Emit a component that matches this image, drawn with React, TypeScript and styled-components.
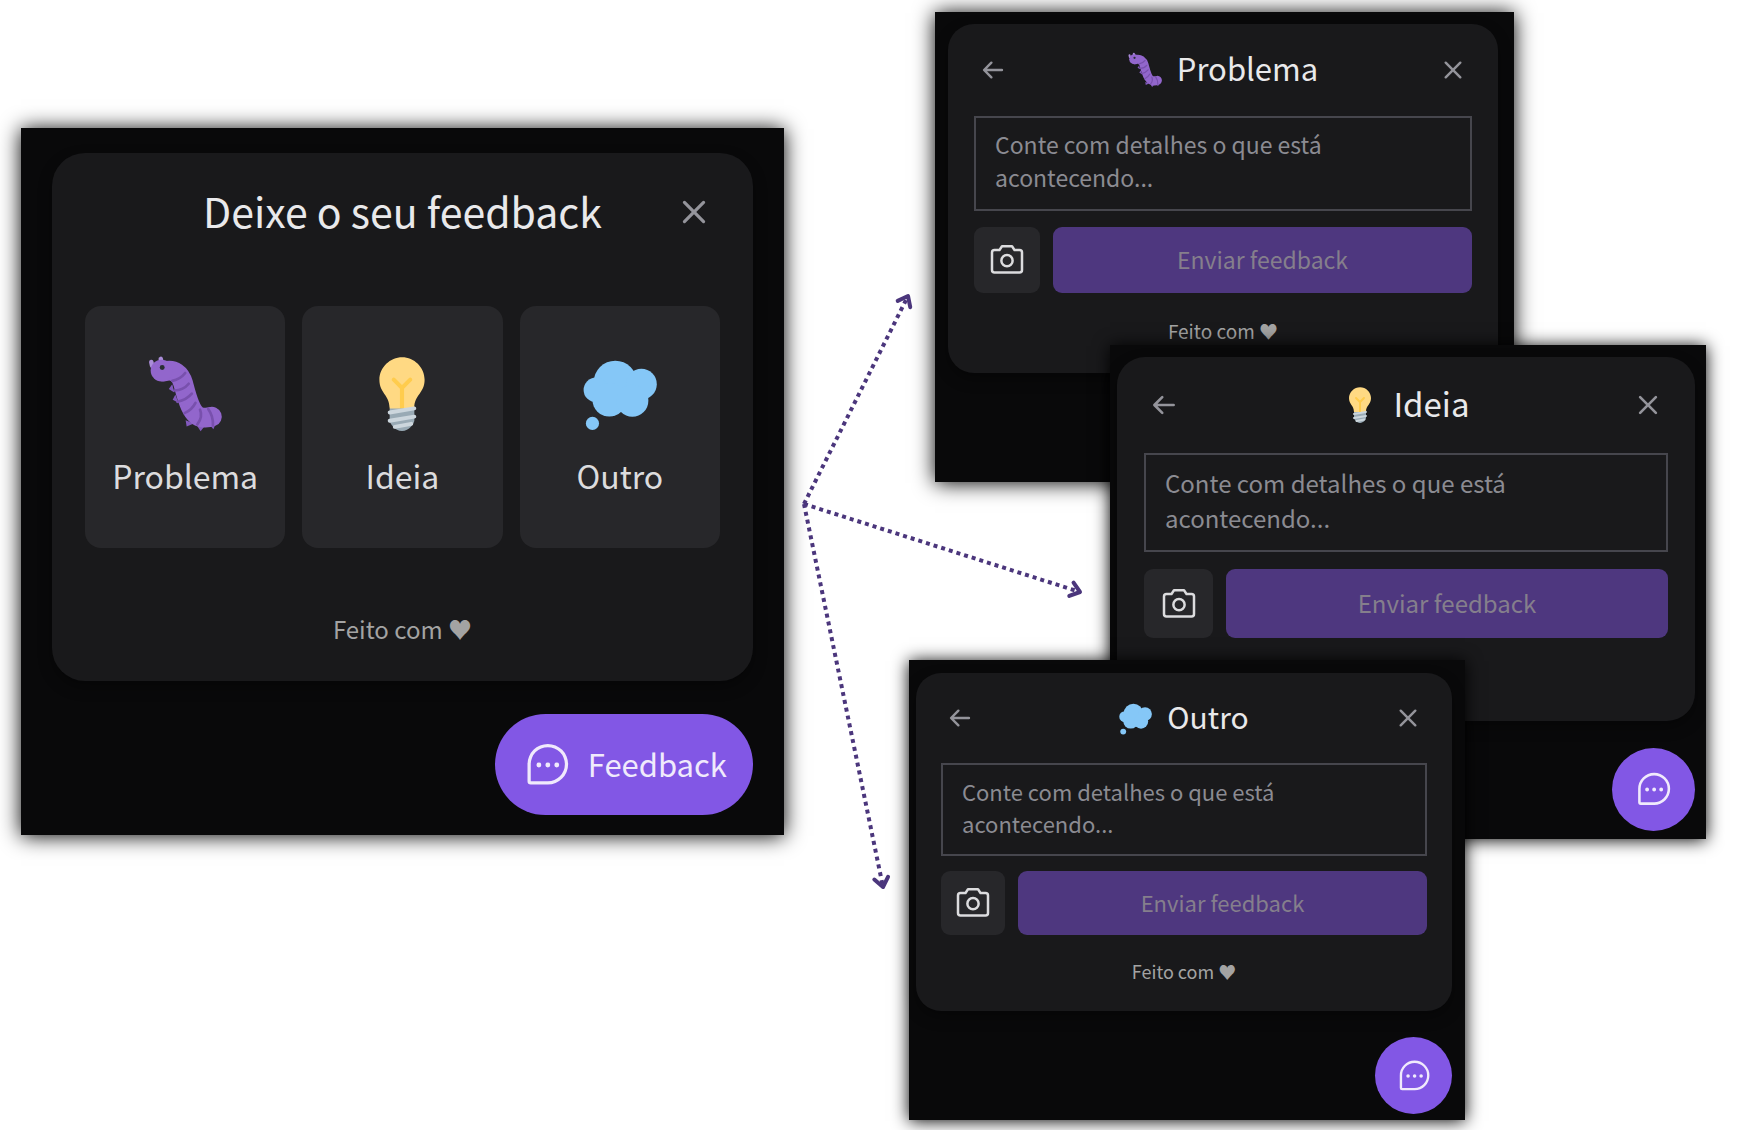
import React, { useId } from "react";
import styled, { createGlobalStyle } from "styled-components";
import {
  PiArrowLeftBold,
  PiCamera,
  PiChatTeardropDots,
  PiXBold,
} from "react-icons/pi";

const fontStack = `"Noto Sans CJK JP", "Noto Sans", "DejaVu Sans", sans-serif`;

const GlobalStyle = createGlobalStyle`
  *, *::before, *::after { box-sizing: border-box; }
  body { margin: 0; background: #fff; font-family: ${fontStack}; }
  button, textarea { font: inherit; border: 0; margin: 0; padding: 0; }
  h2, p { margin: 0; font-weight: 400; }
`;

type Metrics = {
  space: number;
  gap: number;
  header: number;
  title: number;
  text: number;
  line: number;
  small: number;
  footer: number;
  icon: number;
  button: number;
  radius: number;
};

const base: Metrics = { space: 26, gap: 16, header: 40, title: 31, text: 23, line: 33, small: 19, footer: 28, icon: 26, button: 66, radius: 26 };
const large: Metrics = { space: 27, gap: 17, header: 42, title: 33, text: 24, line: 35, small: 20, footer: 29, icon: 28, button: 69, radius: 28 };
const compact: Metrics = { space: 25, gap: 15, header: 40, title: 30, text: 22, line: 32, small: 18, footer: 26, icon: 26, button: 64, radius: 25 };

const Canvas = styled.main`
  position: relative;
  min-height: 100vh;
  min-width: 1720px;
  overflow: hidden;
`;

const Window = styled.section<{ $x: number; $y: number; $w: number; $h: number; $pad: string; $blur: number }>`
  position: absolute;
  left: ${(p) => p.$x}px;
  top: ${(p) => p.$y}px;
  width: ${(p) => p.$w}px;
  min-height: ${(p) => p.$h}px;
  padding: ${(p) => p.$pad};
  display: flex;
  flex-direction: column;
  background: #09090a;
  box-shadow: 0 1px ${(p) => p.$blur}px #000;
`;

const Card = styled.div<{ $space: number; $radius: number }>`
  display: flex;
  flex-direction: column;
  padding: ${(p) => p.$space}px;
  border-radius: ${(p) => p.$radius}px;
  background: #19191b;
  box-shadow: 0 6px 14px rgba(0, 0, 0, 0.35);
`;

const Header = styled.header<{ $h: number; $below: number }>`
  display: grid;
  grid-template-columns: 52px 1fr 52px;
  align-items: center;
  height: ${(p) => p.$h}px;
  margin-bottom: ${(p) => p.$below}px;
`;

const Title = styled.h2<{ $size: number }>`
  grid-column: 2;
  display: flex;
  align-items: center;
  justify-content: center;
  gap: 15px;
  font-size: ${(p) => p.$size}px;
  line-height: 34px;
  color: #e9e9eb;
  white-space: nowrap;
`;

const TitleText = styled.span`
  padding-bottom: 5px;
`;

const IconButton = styled.button<{ $end?: boolean; $inset?: number }>`
  display: flex;
  align-items: center;
  justify-content: ${(p) => (p.$end ? "flex-end" : "flex-start")};
  grid-column: ${(p) => (p.$end ? 3 : 1)};
  && { padding: 0 ${(p) => p.$inset ?? 6}px; }
  color: #94949b;
  background: none;
  cursor: pointer;
`;

const Options = styled.div`
  display: grid;
  grid-template-columns: repeat(3, 1fr);
  gap: 17px;
`;

const Option = styled.button`
  display: flex;
  flex-direction: column;
  align-items: center;
  gap: 20px;
  && {
    padding: 51px 0 49px;
    font-size: 32px;
    line-height: 48px;
  }
  border-radius: 16px;
  background: #27272a;
  color: #dcdcde;
  cursor: pointer;
`;

const Form = styled.form<{ $gap: number }>`
  display: flex;
  flex-direction: column;
  gap: ${(p) => p.$gap}px;
`;

const Message = styled.textarea<{ $size: number; $line: number }>`
  display: block;
  width: 100%;
  height: ${(p) => p.$line * 2 + 29}px;
  && {
    padding: 10px 19px;
    border: 2px solid #46464d;
    font-size: ${(p) => p.$size}px;
    line-height: ${(p) => p.$line}px;
  }
  overflow: hidden;
  resize: none;
  background: transparent;
  color: #f4f4f5;
  &::placeholder { color: #8b8b92; opacity: 1; }
`;

const Actions = styled.div<{ $h: number }>`
  display: grid;
  grid-template-columns: ${(p) => p.$h}px 1fr;
  gap: 13px;
  height: ${(p) => p.$h}px;
`;

const Capture = styled.button`
  display: grid;
  place-items: center;
  border-radius: 9px;
  background: #27272a;
  color: #dcdcde;
  cursor: pointer;
`;

const Send = styled.button<{ $size: number }>`
  border-radius: 9px;
  background: #4e377f;
  color: #857f8c;
  && {
    padding-bottom: 3px;
    font-size: ${(p) => p.$size}px;
  }
`;

const Footer = styled.p<{ $size: number; $above: number; $line: number }>`
  margin-top: ${(p) => p.$above}px;
  padding-bottom: 4px;
  text-align: center;
  font-size: ${(p) => p.$size}px;
  line-height: ${(p) => p.$line - 4}px;
  color: #a3a3a3;
`;

const Launcher = styled.button<{ $size: number; $above: number; $wide?: boolean }>`
  align-self: flex-end;
  display: flex;
  align-items: center;
  justify-content: center;
  gap: 15px;
  height: ${(p) => p.$size}px;
  width: ${(p) => (p.$wide ? "auto" : `${p.$size}px`)};
  && {
    margin-top: ${(p) => p.$above}px;
    padding: ${(p) => (p.$wide ? "0 26px" : "0")};
    font-size: 31px;
  }
  border-radius: 52px;
  background: #8257e5;
  color: #f0eafc;
  cursor: pointer;
`;

const LauncherText = styled.span`
  padding-bottom: 3px;
`;

const Arrows = styled.svg`
  position: absolute;
  left: 0;
  top: 0;
  pointer-events: none;
`;

type Kind = "problem" | "idea" | "other";

function Worm() {
  return (
    <g transform="translate(0.8 -0.2)">
      <path d="M1.200 4.500 0.800 2.600M5.800 3 5.400 1.100" stroke="#aa8dd8" strokeWidth="2.200" strokeLinecap="round" />
      <path d="M11 13.500 9.300 15.800 12 17.500ZM12.500 18.500 11.200 21 14 22.500ZM17.500 31 18 34 21.500 32.500ZM23 33.500 24.800 36.300 27 33.500ZM29.500 33.500 31 35.300 32.500 32Z" fill="#8259bd" />
      <path d="M7 7.300C12 5.800 15 8.500 16.300 13C17.800 18.500 20 28.800 25.500 29.600C28 30 29.500 29.500 30.300 29.200" fill="none" stroke="#9266cc" strokeWidth="9.600" strokeLinecap="round" strokeLinejoin="round" />
      <circle cx="5.800" cy="6.800" r="5.300" fill="#9266cc" />
      <path d="M11 11.800Q15 11 17.300 8M12 16.500Q16.500 16.300 19 13.200M13.500 22Q18 21 20.500 18M17 27.500Q20.500 26 22.300 22.500M23.200 33Q26 29.500 24.500 25.800M30.800 33.500Q31 29 28.500 25.500" fill="none" stroke="#7850ad" strokeWidth="1.300" strokeLinecap="round" />
      <circle cx="6.100" cy="5.300" r="1.200" fill="#292f33" />
    </g>
  );
}

function Bulb() {
  return (
    <>
      <path fill="#FFD983" d="M29 11.060c0 6.439-5 7.439-5 13.440 0 3.098-3.123 3.359-5.500 3.359-2.053 0-6.586-.779-6.586-3.361C11.914 18.500 7 17.500 7 11.060 7 5.029 12.285.14 18.083.14 23.883.14 29 5.029 29 11.060z" />
      <path fill="#FFCC4D" d="M22.707 10.293c-.391-.391-1.023-.391-1.414 0L18 13.586l-3.293-3.293c-.391-.391-1.023-.391-1.414 0s-.391 1.023 0 1.414L17 15.414V26c0 .553.447 1 1 1s1-.447 1-1V15.414l3.707-3.707c.391-.391.391-1.023 0-1.414z" />
      <path fill="#99AAB5" d="M24 31c0 1.104-2.500 5-6 5s-6-3.896-6-5v-6h12v6z" />
      <path d="M12 27 24 25M12 31 24 29M14.500 34 22.500 32.500" stroke="#CCD6DD" strokeWidth="1.900" strokeLinecap="round" />
    </>
  );
}

function Cloud() {
  return (
    <g fill="#85c7f7">
      <circle cx="15.700" cy="12.300" r="10.500" />
      <circle cx="28.400" cy="13.200" r="7.500" />
      <circle cx="6.300" cy="16" r="6" />
      <circle cx="12.800" cy="20.800" r="8.200" />
      <circle cx="24" cy="21.300" r="7.800" />
      <circle cx="4.600" cy="32.300" r="3.200" />
    </g>
  );
}

const drawings = { problem: Worm, idea: Bulb, other: Cloud };

function Emoji({ kind, size }: { kind: Kind; size: number }) {
  const Drawing = drawings[kind];
  return (
    <svg width={size} height={size} viewBox="0 0 36 36" overflow="visible" aria-hidden="true">
      <Drawing />
    </svg>
  );
}

const options: { kind: Kind; label: string }[] = [
  { kind: "problem", label: "Problema" },
  { kind: "idea", label: "Ideia" },
  { kind: "other", label: "Outro" },
];

function FeedbackForm({ kind, title, metrics: m }: { kind: Kind; title: string; metrics: Metrics }) {
  const id = useId();
  return (
    <Card $space={m.space} $radius={m.radius}>
      <Header $h={m.header} $below={m.space}>
        <IconButton type="button" aria-label="Voltar">
          <PiArrowLeftBold size={m.icon} />
        </IconButton>
        <Title id={id} $size={m.title}>
          <Emoji kind={kind} size={m.title + 3} />
          <TitleText>{title}</TitleText>
        </Title>
        <IconButton type="button" aria-label="Fechar" $end>
          <PiXBold size={m.icon} />
        </IconButton>
      </Header>
      <Form $gap={m.gap}>
        <Message
          aria-labelledby={id}
          placeholder="Conte com detalhes o que está acontecendo..."
          $size={m.text}
          $line={m.line}
        />
        <Actions $h={m.button}>
          <Capture type="button" aria-label="Capturar tela">
            <PiCamera size={40} />
          </Capture>
          <Send type="submit" disabled $size={m.text}>
            Enviar feedback
          </Send>
        </Actions>
      </Form>
      <Footer $size={m.small} $above={m.space} $line={m.footer}>
        Feito com ♥
      </Footer>
    </Card>
  );
}

export default function App() {
  return (
    <>
      <GlobalStyle />
      <Canvas>
        <Window $x={21} $y={128} $w={763} $h={707} $pad="25px 31px 20px" $blur={20}>
          <Card $space={33} $radius={33}>
            <Header $h={52} $below={68}>
              <Title $size={41}>
                <TitleText>Deixe o seu feedback</TitleText>
              </Title>
              <IconButton type="button" aria-label="Fechar" $end $inset={9}>
                <PiXBold size={34} />
              </IconButton>
            </Header>
            <Options>
              {options.map((o) => (
                <Option key={o.kind} type="button">
                  <Emoji kind={o.kind} size={74} />
                  {o.label}
                </Option>
              ))}
            </Options>
            <Footer $size={24} $above={66} $line={34}>
              Feito com ♥
            </Footer>
          </Card>
          <Launcher type="button" $size={101} $above={33} $wide>
            <PiChatTeardropDots size={52} />
            <LauncherText>Feedback</LauncherText>
          </Launcher>
        </Window>

        <Window $x={935} $y={12} $w={579} $h={470} $pad="12px 16px 20px 13px" $blur={20}>
          <FeedbackForm kind="problem" title="Problema" metrics={base} />
        </Window>

        <Window $x={1110} $y={345} $w={596} $h={494} $pad="12px 11px 7px 7px" $blur={16}>
          <FeedbackForm kind="idea" title="Ideia" metrics={large} />
          <Launcher type="button" aria-label="Feedback" $size={83} $above={27}>
            <PiChatTeardropDots size={41} />
          </Launcher>
        </Window>

        <Window $x={909} $y={660} $w={556} $h={460} $pad="13px 13px 6px 7px" $blur={16}>
          <FeedbackForm kind="other" title="Outro" metrics={compact} />
          <Launcher type="button" aria-label="Feedback" $size={77} $above={26}>
            <PiChatTeardropDots size={38} />
          </Launcher>
        </Window>

        <Arrows width="1748" height="1130" viewBox="0 0 1748 1130" aria-hidden="true">
          <defs>
            <marker id="tip" markerUnits="userSpaceOnUse" markerWidth="30" markerHeight="30" viewBox="-15 -15 30 30" orient="auto">
              <path d="M-9-7 0 0-9 7" fill="none" stroke="#4b367c" strokeWidth="4" strokeLinecap="round" strokeLinejoin="round" />
            </marker>
          </defs>
          <g stroke="#4b367c" strokeWidth="4" strokeDasharray="4 4">
            <line x1="804" y1="504" x2="908" y2="296" markerEnd="url(#tip)" />
            <line x1="804" y1="504" x2="1080" y2="592" markerEnd="url(#tip)" />
            <line x1="804" y1="504" x2="883" y2="887" markerEnd="url(#tip)" />
          </g>
        </Arrows>
      </Canvas>
    </>
  );
}
